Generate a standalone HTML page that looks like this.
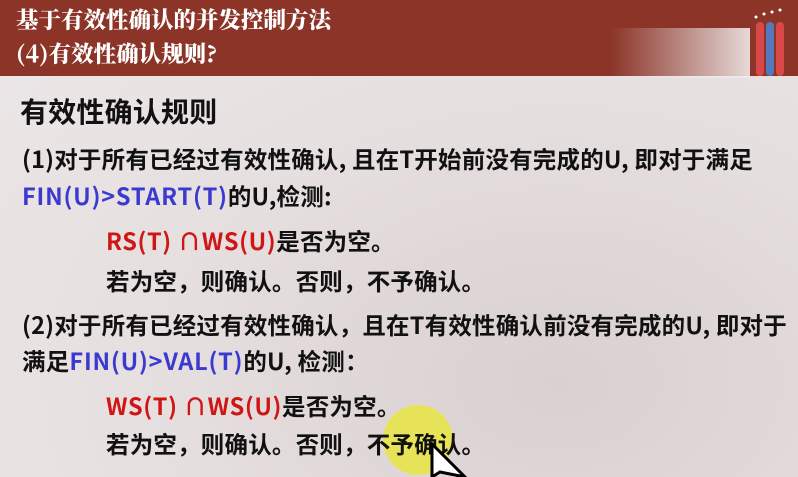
<!DOCTYPE html>
<html><head><meta charset="utf-8"><style>
body{margin:0;width:798px;height:477px;overflow:hidden;position:relative;
background:radial-gradient(ellipse at 70% 80%,#d9d0cf 0%,#e6dfdf 50%,#ece7e8 100%);
font-family:"Noto Sans CJK SC","Liberation Sans",sans-serif;font-weight:bold;color:#111}
.hd{position:absolute;left:0;top:0;width:798px;height:76px;background:#8b3427}
.hd div{position:absolute;left:16px;color:#fff;font-family:"Noto Serif CJK SC","Liberation Serif",serif;font-size:22.5px;font-weight:900;line-height:24px}
.fade{position:absolute;left:610px;top:28px;width:140px;height:50px;background:linear-gradient(90deg,rgba(240,235,235,0),rgba(240,235,235,.9))}
.t{position:absolute;white-space:nowrap;font-size:23.5px;line-height:28px;letter-spacing:.2px}
.b{color:#3a3ad0;letter-spacing:.8px}.r{color:#d01515;letter-spacing:.6px}
</style></head><body>
<div class="hd"><div style="top:7px">基于有效性确认的并发控制方法</div><div style="top:41px">(4)有效性确认规则?</div></div>
<div class="fade"></div>
<svg style="position:absolute;left:752px;top:8px" width="40" height="68">
<circle cx="4" cy="9" r="1.5" fill="#fff"/><circle cx="12" cy="6" r="1.5" fill="#fff"/><circle cx="20" cy="4" r="1.5" fill="#fff"/><circle cx="28" cy="2" r="1.5" fill="#fff"/>
<rect x="4" y="14" width="8" height="54" rx="4" fill="#d84848"/><rect x="14" y="14" width="8" height="54" rx="4" fill="#5577bb"/><rect x="24" y="14" width="8" height="54" rx="4" fill="#d84848"/>
</svg>
<div class="t" style="left:20px;top:94px;font-size:28px;line-height:34px">有效性确认规则</div>
<div class="t" style="left:22px;top:144px">(1)对于所有已经过有效性确认, 且在T开始前没有完成的U, 即对于满足</div>
<div class="t" style="left:22px;top:181px"><span class="b">FIN(U)&gt;START(T)</span>的U,检测:</div>
<div class="t" style="left:106px;top:226px"><span class="r">RS(T) ∩WS(U)</span>是否为空。</div>
<div class="t" style="left:106px;top:266px">若为空，则确认。否则，不予确认。</div>
<div class="t" style="left:22px;top:310px">(2)对于所有已经过有效性确认，且在T有效性确认前没有完成的U, 即对于</div>
<div class="t" style="left:22px;top:346px">满足<span class="b">FIN(U)&gt;VAL(T)</span>的U, 检测：</div>
<div class="t" style="left:106px;top:391px"><span class="r">WS(T) ∩WS(U)</span>是否为空。</div>
<div style="position:absolute;left:383px;top:405px;width:70px;height:70px;border-radius:50%;background:#e8e44a;opacity:.9"></div>
<div class="t" style="left:106px;top:429px">若为空，则确认。否则，不予确认。</div>
<svg style="position:absolute;left:430px;top:442px" width="40" height="35"><path d="M2 2 L2 35 L10 30 L35 35 Z" fill="#fff" stroke="#000" stroke-width="3"/></svg>
</body></html>
